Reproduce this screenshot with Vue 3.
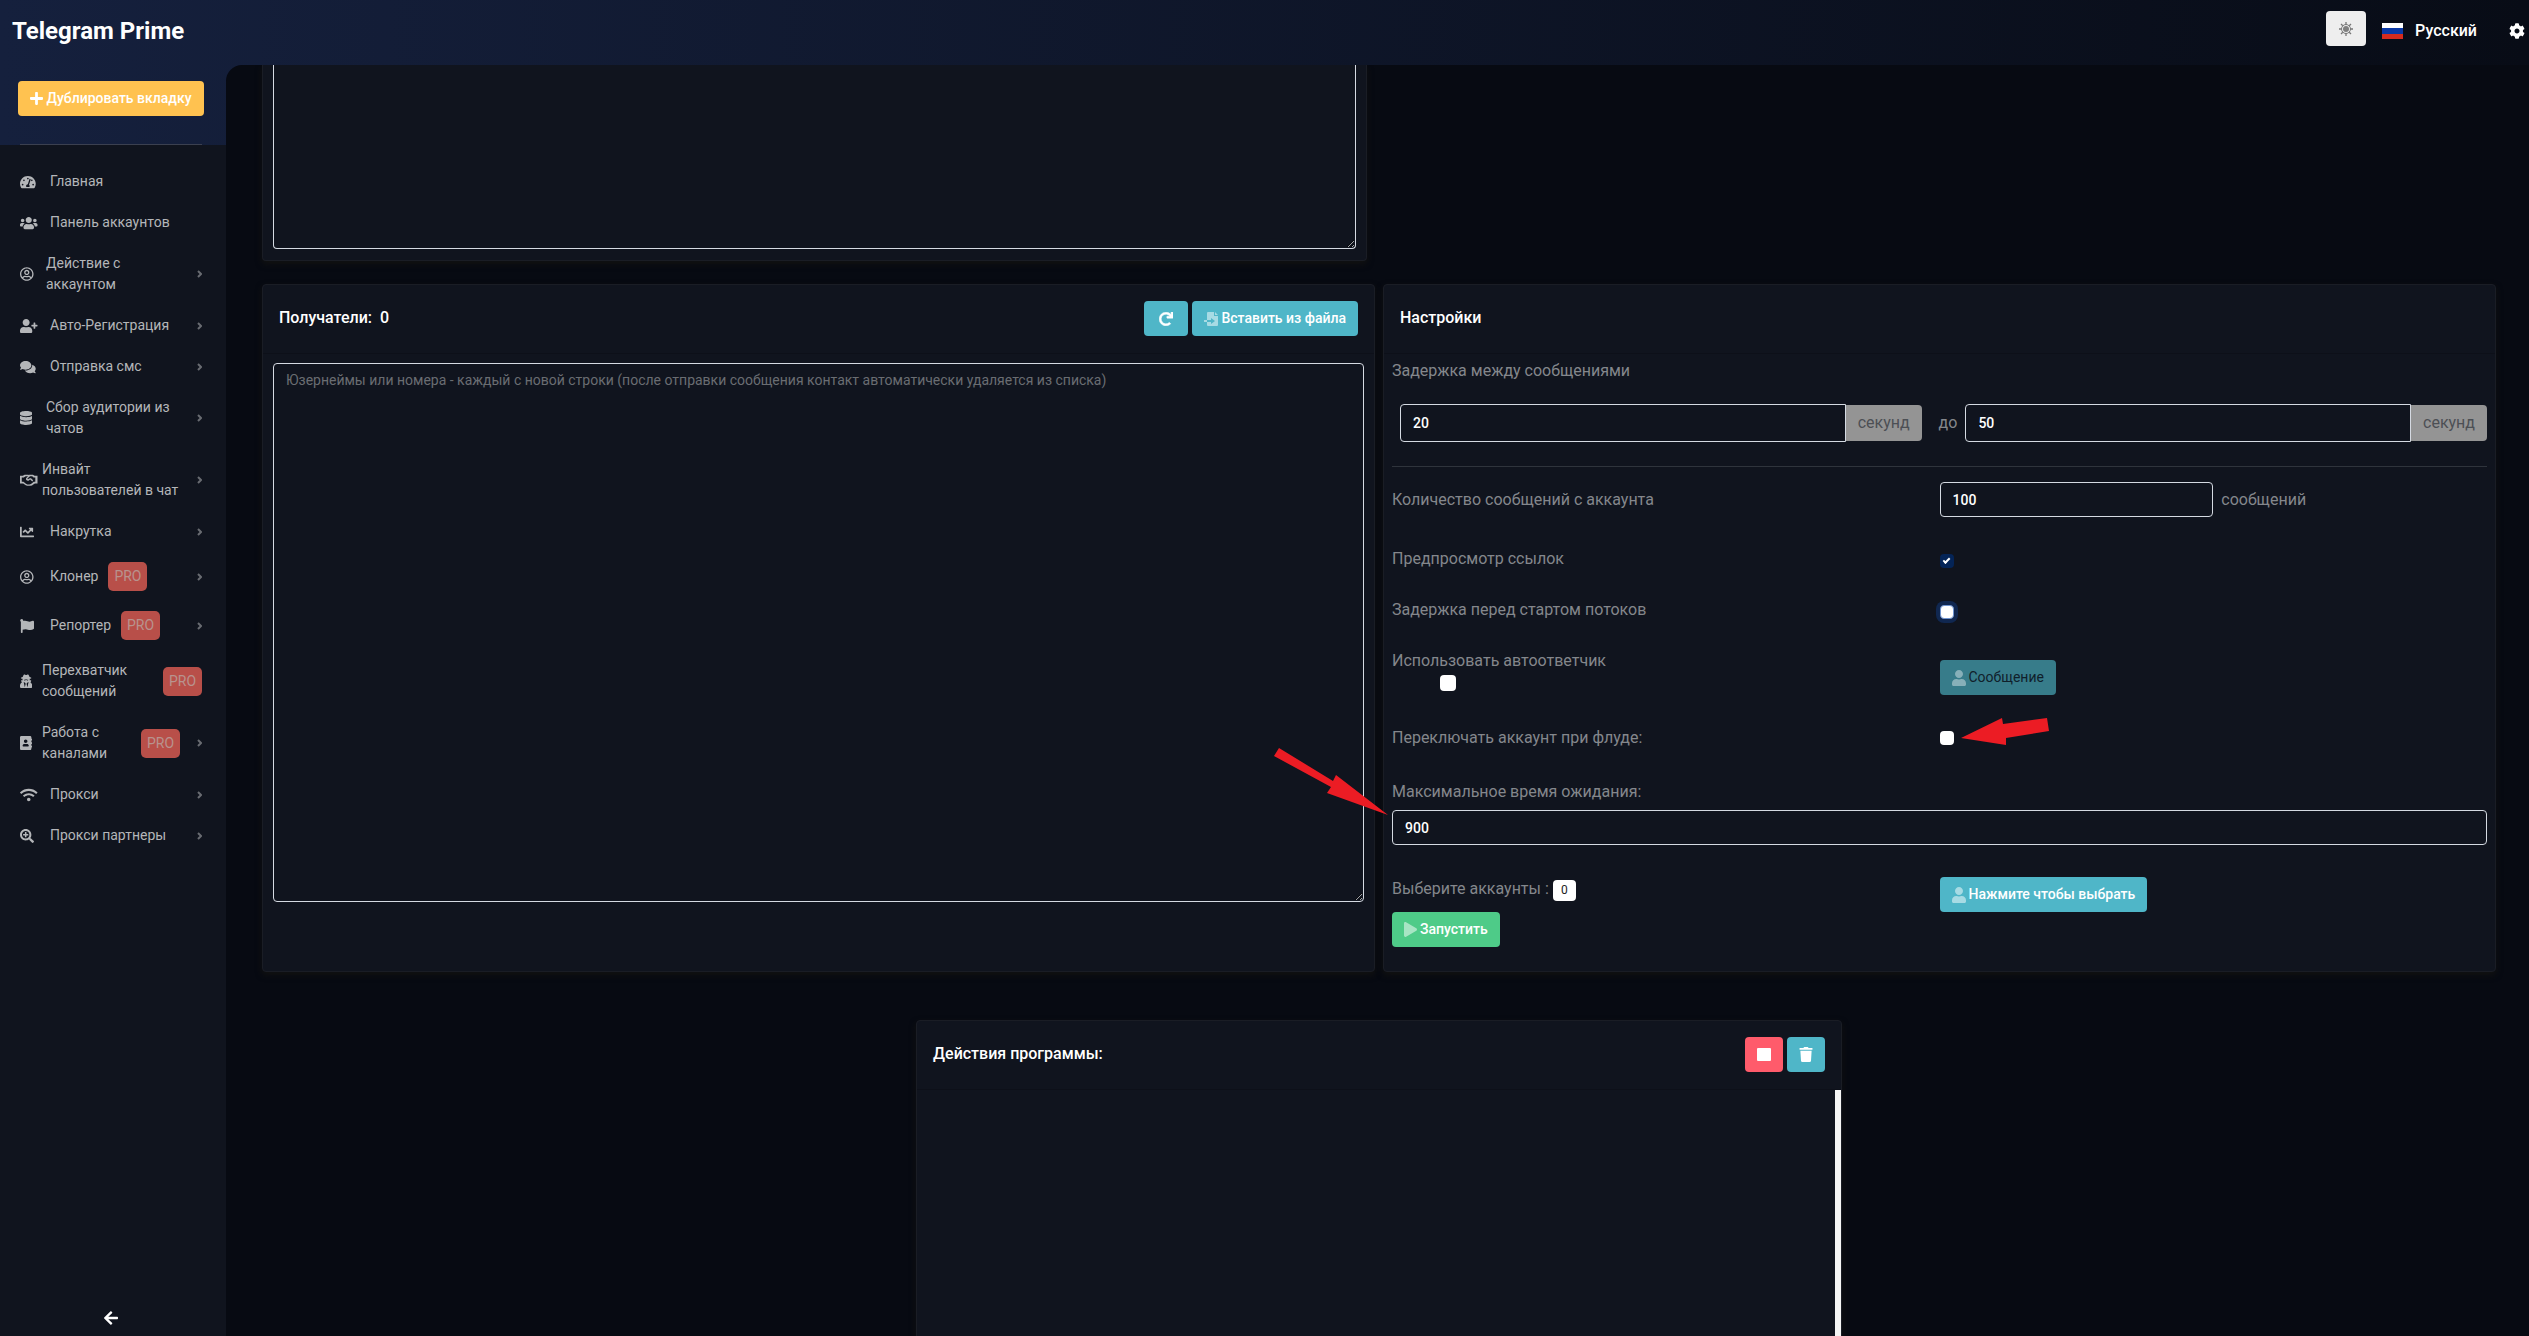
<script setup>
import { ref } from 'vue'

const userPath =
  'M224 256c70.7 0 128-57.3 128-128S294.7 0 224 0 96 57.3 96 128s57.3 128 128 128zm89.6 32h-16.7c-22.2 10.2-46.9 16-72.9 16s-50.6-5.8-72.9-16h-16.7C60.2 288 0 348.2 0 422.4V464c0 26.5 21.5 48 48 48h352c26.5 0 48-21.5 48-48v-41.6c0-74.2-60.2-134.4-134.4-134.4z'
const circleUser =
  'M248 104c-53 0-96 43-96 96s43 96 96 96 96-43 96-96-43-96-96-96zm0 144c-26.5 0-48-21.5-48-48s21.5-48 48-48 48 21.5 48 48-21.5 48-48 48zm0-240C111 8 0 119 0 256s111 248 248 248 248-111 248-248S385 8 248 8zm0 448c-49.7 0-95.1-18.3-130.1-48.4 14.9-23 40.4-38.6 69.6-39.5 20.8 6.4 40.6 9.6 60.5 9.6s39.7-3.1 60.5-9.6c29.2 1 54.7 16.5 69.6 39.5-35 30.1-80.4 48.4-130.1 48.4zm162.7-84.1c-24.4-31.4-62.1-51.9-105.1-51.9-10.2 0-26 9.6-57.6 9.6-31.5 0-47.4-9.6-57.6-9.6-42.9 0-80.6 20.5-105.1 51.9C61.9 339.2 48 299.2 48 256c0-110.3 89.7-200 200-200s200 89.7 200 200c0 43.2-13.9 83.2-37.3 115.9z'

const menu = [
  {
    text: 'Главная', w: 576,
    d: 'M288 32C129 32 0 161 0 320c0 53 14 102 39 145 6 10 16 15 27 15h444c11 0 21-5 27-15 25-43 39-92 39-145C576 161 447 32 288 32zm0 64c18 0 32 14 32 32s-14 32-32 32-32-14-32-32 14-32 32-32zM96 384c-18 0-32-14-32-32s14-32 32-32 32 14 32 32-14 32-32 32zm48-160c-18 0-32-14-32-32s14-32 32-32 32 14 32 32-14 32-32 32zm246-51-61 184c14 12 23 29 23 49 0 11-3 22-8 31H232c-5-9-8-20-8-31 0-35 28-64 62-64l58-184c4-13 18-20 31-15 13 4 19 17 15 30zm42 51c-18 0-32-14-32-32s14-32 32-32 32 14 32 32-14 32-32 32zm48 160c-18 0-32-14-32-32s14-32 32-32 32 14 32 32-14 32-32 32z'
  },
  {
    text: 'Панель аккаунтов', w: 640,
    d: 'M96 224c35.3 0 64-28.7 64-64s-28.7-64-64-64-64 28.7-64 64 28.7 64 64 64zm448 0c35.3 0 64-28.7 64-64s-28.7-64-64-64-64 28.7-64 64 28.7 64 64 64zm32 32h-64c-17.6 0-33.5 7.1-45.1 18.6 40.3 22.1 68.9 62 75.1 109.4h66c17.7 0 32-14.3 32-32v-32c0-35.3-28.7-64-64-64zm-256 0c61.9 0 112-50.1 112-112S381.9 32 320 32 208 82.1 208 144s50.1 112 112 112zm76.8 32h-8.3c-20.8 10-43.9 16-68.5 16s-47.6-6-68.5-16h-8.3C179.6 288 128 339.6 128 403.2V432c0 26.5 21.5 48 48 48h288c26.5 0 48-21.5 48-48v-28.8c0-63.6-51.6-115.2-115.2-115.2zm-223.7-13.4C161.5 263.1 145.6 256 128 256H64c-35.3 0-64 28.7-64 64v32c0 17.7 14.3 32 32 32h65.9c6.3-47.4 34.9-87.3 75.2-109.4z'
  },
  { text: 'Действие с аккаунтом', w: 496, d: circleUser, fit: 'mid', arrow: true },
  {
    text: 'Авто-Регистрация', w: 640, arrow: true,
    d: 'M624 208h-64v-64c0-8.8-7.2-16-16-16h-32c-8.8 0-16 7.2-16 16v64h-64c-8.8 0-16 7.2-16 16v32c0 8.8 7.2 16 16 16h64v64c0 8.8 7.2 16 16 16h32c8.8 0 16-7.2 16-16v-64h64c8.8 0 16-7.2 16-16v-32c0-8.8-7.2-16-16-16z' + userPath
  },
  {
    text: 'Отправка смс', w: 576, arrow: true,
    d: 'M416 192c0-88.4-93.1-160-208-160S0 103.6 0 192c0 34.3 14.1 65.9 38 92-13.4 30.2-35.5 54.2-35.8 54.5-2.2 2.3-2.8 5.7-1.5 8.7S4.8 352 8 352c36.6 0 66.9-12.3 88.7-25 32.2 15.7 70.3 25 111.3 25 114.9 0 208-71.6 208-160zm122 220c23.9-26 38-57.7 38-92 0-66.9-53.5-124.2-129.3-148.1.9 6.6 1.3 13.3 1.3 20.1 0 105.9-107.7 192-240 192-10.8 0-21.3-.8-31.7-1.9C207.8 439.6 281.8 480 368 480c41 0 79.1-9.2 111.3-25 21.8 12.7 52.1 25 88.7 25 3.2 0 6.1-1.9 7.3-4.8 1.3-2.9.7-6.3-1.5-8.7-.3-.3-22.4-24.2-35.8-54.5z'
  },
  {
    text: 'Сбор аудитории из чатов', w: 448, fit: 'mid', arrow: true,
    d: 'M448 73v46C448 159 348 192 224 192S0 159 0 119V73C0 33 100 0 224 0s224 33 224 73zM448 176v103C448 319 348 352 224 352S0 319 0 279V176c48 33 136 49 224 49s176-16 224-49zm0 160v103C448 479 348 512 224 512S0 479 0 439V336c48 33 136 49 224 49s176-16 224-49z'
  },
  {
    text: 'Инвайт пользователей в чат', w: 640, fit: 'tight', arrow: true,
    d: 'M0 100h105l62-36h138l15 10 15-10h138l62 36h105v284h-96l-74 50-30 22-60 14H260l-50-22-92-64H0zm64 60v160h60l92 70 54 28h70l60-16 60-50 42-32h58V160h-64l-50-38h-80l-96 76 20 32 68-42h44l78 78-30 44-80-68-60 38c-40 18-90-20-92-60 0-20 8-36 22-48l54-50h-84l-70 38z'
  },
  {
    text: 'Накрутка', w: 512, arrow: true,
    d: 'M496 384H64V80c0-8.84-7.16-16-16-16H16C7.16 64 0 71.16 0 80v336c0 17.67 14.33 32 32 32h464c8.84 0 16-7.16 16-16v-32c0-8.84-7.16-16-16-16zM464 96H345.94c-21.38 0-32.09 25.85-16.97 40.97l32.4 32.4L288 242.75l-73.37-73.37c-12.5-12.5-32.76-12.5-45.25 0l-68.69 68.69c-6.25 6.25-6.25 16.38 0 22.63l22.62 22.62c6.25 6.25 16.38 6.25 22.63 0L192 237.25l73.37 73.37c12.5 12.5 32.76 12.5 45.25 0l96-96 32.4 32.4c15.12 15.12 40.97 4.41 40.97-16.97V112c.01-8.84-7.15-16-15.99-16z'
  },
  { text: 'Клонер', w: 496, d: circleUser, pro: true, arrow: true },
  {
    text: 'Репортер', w: 512, pro: true, arrow: true,
    d: 'M350 99C296 99 252 64 184 64c-25 0-47 4-68 12a56 56 0 0 0 4-24C118 24 95 1 66 0 34-1 8 24 8 56c0 19 9 36 24 46V488c0 13 11 24 24 24h16c13 0 24-11 24-24v-94c28-12 64-22 114-22 54 0 98 34 166 34 48 0 86-16 122-41 9-6 14-15 14-26V96c0-23-24-39-45-29-35 16-77 32-117 32z'
  },
  {
    text: 'Перехватчик сообщений', w: 448, fit: 'tight', pro: true,
    d: 'M384 308l23-55c5-10-3-21-14-21h-39c2-13 3-26 3-40 0-6 0-12-1-17 37-8 60-19 60-31 0-13-26-25-66-33-9-32-27-67-40-84-10-12-26-15-40-8l-28 14c-11 6-25 6-36 0L178 19c-14-7-30-4-40 8-14 17-31 52-40 84-40 8-66 20-66 33 0 12 23 23 60 31-1 5-1 11-1 17 0 14 1 27 4 40H56c-12 0-20 12-14 23l26 52C28 331 0 373 0 422v42c0 27 22 48 48 48h352c27 0 48-21 48-48v-42c0-48-26-89-64-114zM176 480l-41-192 49 32 24 40zm96 0-32-120 24-40 49-32zM144 206c28 8 58 8 72-12h16c14 20 44 20 72 12-8 30-30 38-48 30-14-6-18-22-24-22h-16c-6 0-10 16-24 22-18 8-40 0-48-30z'
  },
  {
    text: 'Работа с каналами', w: 448, fit: 'tight', pro: true, arrow: true,
    d: 'M436 160c7 0 12-5 12-12v-40c0-7-5-12-12-12h-20V48c0-27-21-48-48-48H48C22 0 0 21 0 48v416c0 27 22 48 48 48h320c27 0 48-21 48-48v-48h20c7 0 12-5 12-12v-40c0-7-5-12-12-12h-20v-64h20c7 0 12-5 12-12v-40c0-7-5-12-12-12h-20v-64zM208 128c35 0 64 29 64 64s-29 64-64 64-64-29-64-64 29-64 64-64zm112 237c0 10-10 19-22 19H118c-12 0-22-9-22-19v-19c0-32 30-58 67-58 4 0 16 8 45 8s41-8 45-8c37 0 67 26 67 58z'
  },
  {
    text: 'Прокси', w: 640, arrow: true,
    d: 'M635 154C457-12 183-12 5 154c-7 6-7 17 0 23l34 34c6 6 17 7 23 0 145-134 371-134 516 0 6 7 17 6 23 0l34-34c6-6 6-17 0-23zM320 352c-35 0-64 29-64 64s29 64 64 64 64-29 64-64-29-64-64-64zm203-87c-115-102-290-102-405 0-7 6-8 17-1 23l35 34c6 6 16 7 23 1 82-73 208-73 291 0 7 6 17 5 23-1l34-34c7-6 7-17 0-23z'
  },
  {
    text: 'Прокси партнеры', w: 512, arrow: true,
    d: 'M304 192v32c0 7-5 12-12 12h-56v56c0 7-5 12-12 12h-32c-7 0-12-5-12-12v-56h-56c-7 0-12-5-12-12v-32c0-7 5-12 12-12h56v-56c0-7 5-12 12-12h32c7 0 12 5 12 12v56h56c7 0 12 5 12 12zm201 285-28 28c-10 10-25 10-34 0L343 405c-4-4-7-11-7-17v-16c-35 28-80 44-128 44C93 416 0 323 0 208S93 0 208 0s208 93 208 208c0 48-16 93-44 128h16c6 0 13 3 17 7l100 100c9 9 9 24 0 34zM344 208c0-75-61-136-136-136S72 133 72 208s61 136 136 136 136-61 136-136z'
  }
]

const recipients = ref('')
const delayFrom = ref('20')
const delayTo = ref('50')
const perAccount = ref('100')
const maxWait = ref('900')
const preview = ref(true)
const startDelay = ref(false)
const autoReply = ref(false)
const floodSwitch = ref(false)
</script>

<template>
  <div class="app">
    <header class="topbar">
      <h1 class="brand">Telegram Prime</h1>
      <button class="theme" type="button" aria-label="Тема">
        <svg width="14" height="14" viewBox="0 0 14 14">
          <path d="M7 0v14M0 7h14M2 2l10 10M12 2 2 12" stroke="#777" stroke-width="1.3" />
          <circle cx="7" cy="7" r="4.5" fill="#eee" stroke="#777" />
          <circle cx="7" cy="7" r="3" fill="#808080" />
        </svg>
      </button>
      <a class="lang" href="#">
        <svg width="21" height="16" viewBox="0 0 21 16">
          <path fill="#fff" d="M0 0h21v6H0z" /><path fill="#0b39a6" d="M0 5h21v6H0z" /><path fill="#d52b1e" d="M0 11h21v5H0z" />
        </svg>
        Русский
      </a>
      <button class="gear" type="button" aria-label="Настройки">
        <svg width="16" height="16" viewBox="0 0 512 512"><path fill="currentColor" d="M487.4 315.7l-42.6-24.6c4.3-23.2 4.3-47 0-70.2l42.6-24.6c4.9-2.8 7.1-8.6 5.5-14-11.1-35.6-30-67.8-54.7-94.6-3.8-4.1-10-5.1-14.8-2.3L380.8 110c-17.9-15.4-38.5-27.3-60.8-35.1V25.8c0-5.6-3.9-10.5-9.4-11.7-36.7-8.2-74.3-7.8-109.2 0-5.5 1.2-9.4 6.1-9.4 11.7V75c-22.2 7.9-42.8 19.8-60.8 35.1L88.7 85.5c-4.9-2.8-11-1.9-14.8 2.3-24.7 26.7-43.6 58.9-54.7 94.6-1.7 5.4.6 11.2 5.5 14L67.3 221c-4.3 23.2-4.3 47 0 70.2l-42.6 24.6c-4.9 2.8-7.1 8.6-5.5 14 11.1 35.6 30 67.8 54.7 94.6 3.8 4.1 10 5.1 14.8 2.3l42.6-24.6c17.9 15.4 38.5 27.3 60.8 35.1v49.2c0 5.6 3.9 10.5 9.4 11.7 36.7 8.2 74.3 7.8 109.2 0 5.5-1.2 9.4-6.1 9.4-11.7v-49.2c22.2-7.9 42.8-19.8 60.8-35.1l42.6 24.6c4.9 2.8 11 1.9 14.8-2.3 24.7-26.7 43.6-58.9 54.7-94.6 1.5-5.5-.7-11.3-5.6-14.1zM256 336c-44.1 0-80-35.9-80-80s35.9-80 80-80 80 35.9 80 80-35.9 80-80 80z" /></svg>
      </button>
    </header>

    <div class="shell">
      <aside class="sidebar">
        <div class="side-top">
          <button class="btn yellow" type="button">
            <svg width="13" height="15" viewBox="0 0 448 512"><path fill="currentColor" d="M416 208H272V64c0-17.67-14.33-32-32-32h-32c-17.67 0-32 14.33-32 32v144H32c-17.67 0-32 14.33-32 32v32c0 17.67 14.33 32 32 32h144v144c0 17.67 14.33 32 32 32h32c17.67 0 32-14.33 32-32V304h144c17.67 0 32-14.33 32-32v-32c0-17.67-14.33-32-32-32z" /></svg>
            Дублировать вкладку
          </button>
          <hr />
        </div>
        <nav class="menu">
          <a v-for="item in menu" :key="item.text" href="#" class="item" :class="item.fit">
            <span class="ico">
              <svg :viewBox="`0 0 ${item.w} 512`" height="14"><path fill="currentColor" fill-rule="evenodd" :d="item.d" /></svg>
            </span>
            <span class="text">{{ item.text }}</span>
            <span v-if="item.pro" class="pro">PRO</span>
            <svg v-if="item.arrow" class="chev" width="5" height="8" viewBox="0 0 5 8"><path d="M1 1l3 3-3 3" fill="none" stroke="currentColor" stroke-width="2" /></svg>
          </a>
        </nav>
        <button class="collapse" type="button" aria-label="Свернуть">
          <svg width="14" height="16" viewBox="0 0 448 512"><path fill="currentColor" d="M257.5 445.1l-22.2 22.2c-9.4 9.4-24.6 9.4-33.9 0L7 273c-9.4-9.4-9.4-24.6 0-33.9L201.4 44.7c9.4-9.4 24.6-9.4 33.9 0l22.2 22.2c9.5 9.5 9.3 25-.4 34.3L136.6 216H424c13.3 0 24 10.7 24 24v32c0 13.3-10.7 24-24 24H136.6l120.5 114.8c9.8 9.3 10 24.8.4 34.3z" /></svg>
        </button>
      </aside>

      <main class="content">
        <section class="card message">
          <textarea class="field" aria-label="Текст сообщения"></textarea>
        </section>

        <section class="card recipients">
          <header class="card-head">
            <h2><label for="recipients">Получатели:&nbsp; 0</label></h2>
            <div class="actions">
              <button class="btn cyan reload" type="button" aria-label="Обновить">
                <svg width="14" height="14" viewBox="0 0 512 512"><path fill="currentColor" stroke="currentColor" stroke-width="20" d="M500.33 0h-47.41a12 12 0 0 0-12 12.57l4 82.76A247.42 247.42 0 0 0 256 8C119.34 8 7.9 119.53 8 256.19 8.1 393.07 119.1 504 256 504a247.1 247.1 0 0 0 166.18-63.91 12 12 0 0 0 .48-17.43l-34-34a12 12 0 0 0-16.38-.55A176 176 0 1 1 402.1 157.8l-101.53-4.87a12 12 0 0 0-12.57 12v47.41a12 12 0 0 0 12 12h200.33a12 12 0 0 0 12-12V12a12 12 0 0 0-12-12z" /></svg>
              </button>
              <button class="btn cyan" type="button">
                <svg width="14" height="14" viewBox="0 0 14 14">
                  <path fill="#fff" fill-opacity=".5" d="M4 0h6v4h4v9q0 1-1 1H4q-1 0-1-1V1q0-1 1-1zM11 0l3 3h-3z" />
                  <path fill="#fff" fill-opacity=".5" d="M0 8h3v2H0z" />
                  <path fill="#4fb6c8" d="M3 8h4V6l4 3-4 3v-2H3z" />
                </svg>
                Вставить из файла
              </button>
            </div>
          </header>
          <div class="card-body">
            <textarea
              id="recipients"
              v-model="recipients"
              class="field"
              placeholder="Юзернеймы или номера - каждый с новой строки (после отправки сообщения контакт автоматически удаляется из списка)"
            ></textarea>
          </div>
        </section>

        <section class="card settings">
          <header class="card-head"><h2>Настройки</h2></header>
          <div class="card-body">
            <label for="delay-from">Задержка между сообщениями</label>
            <div class="range">
              <div class="group">
                <input id="delay-from" v-model="delayFrom" class="field" type="text" />
                <span class="addon">секунд</span>
              </div>
              <label for="delay-to">до</label>
              <div class="group">
                <input id="delay-to" v-model="delayTo" class="field" type="text" />
                <span class="addon">секунд</span>
              </div>
            </div>
            <hr />
            <div class="row count">
              <label for="per-account">Количество сообщений с аккаунта</label>
              <div class="inline">
                <input id="per-account" v-model="perAccount" class="field" type="text" />
                <span>сообщений</span>
              </div>
            </div>
            <div class="row option">
              <label for="preview">Предпросмотр ссылок</label>
              <div class="inline"><input id="preview" v-model="preview" type="checkbox" /></div>
            </div>
            <div class="row option">
              <label for="start-delay">Задержка перед стартом потоков</label>
              <div class="inline"><input id="start-delay" v-model="startDelay" class="focused" type="checkbox" /></div>
            </div>
            <div class="row auto">
              <div class="stack">
                <label for="auto-reply">Использовать автоответчик</label>
                <input id="auto-reply" v-model="autoReply" class="big" type="checkbox" />
              </div>
              <div class="inline">
                <button class="btn cyan" type="button" disabled>
                  <svg width="14" height="16" viewBox="0 0 448 512"><path fill="#fff" fill-opacity=".4" :d="userPath" /></svg>
                  Сообщение
                </button>
              </div>
            </div>
            <div class="row flood">
              <label for="flood">Переключать аккаунт при флуде:</label>
              <div class="inline marked">
                <input id="flood" v-model="floodSwitch" type="checkbox" />
                <svg class="mark-left" width="88" height="28" viewBox="0 0 88 28"><path fill="#ec1c24" d="M0 20 41 0l1 6 44-6 2 13-43 7 0 7z" /></svg>
              </div>
            </div>
            <label for="max-wait">Максимальное время ожидания:</label>
            <div class="marked">
              <input id="max-wait" v-model="maxWait" class="field" type="text" />
              <svg class="mark-right" width="114" height="68" viewBox="0 0 114 68"><path fill="#ec1c24" d="M5 0 59 33l3-6 52 40-61-22 4-6L0 8z" /></svg>
            </div>
            <div class="row pick">
              <div>Выберите аккаунты : <span class="badge">0</span></div>
              <div class="inline">
                <button class="btn cyan" type="button">
                  <svg width="14" height="16" viewBox="0 0 448 512"><path fill="#fff" fill-opacity=".5" :d="userPath" /></svg>
                  Нажмите чтобы выбрать
                </button>
              </div>
            </div>
            <button class="btn green" type="button">
              <svg width="13" height="15" viewBox="0 0 448 512"><path fill="#fff" fill-opacity=".5" d="M424.4 214.7L72.4 6.6C43.8-10.3 0 6.1 0 47.9V464c0 37.5 40.7 60.1 72.4 41.3l352-208c31.4-18.5 31.5-64.1 0-82.6z" /></svg>
              Запустить
            </button>
          </div>
        </section>

        <section class="card log">
          <header class="card-head">
            <h2>Действия программы:</h2>
            <div class="actions">
              <button class="btn red" type="button" aria-label="Остановить">
                <svg width="14" height="14" viewBox="0 0 14 14"><rect width="14" height="13" rx="1" fill="#fff" /></svg>
              </button>
              <button class="btn cyan" type="button" aria-label="Очистить">
                <svg width="14" height="15" viewBox="0 0 448 512"><path fill="currentColor" d="M432 32H312l-9.4-18.7A24 24 0 0 0 281.1 0H166.8a23.72 23.72 0 0 0-21.4 13.3L136 32H16A16 16 0 0 0 0 48v32a16 16 0 0 0 16 16h416a16 16 0 0 0 16-16V48a16 16 0 0 0-16-16zM53.2 467a48 48 0 0 0 47.9 45h245.8a48 48 0 0 0 47.9-45L416 128H32z" /></svg>
              </button>
            </div>
          </header>
          <div class="log-body"><div class="thumb"></div></div>
        </section>
      </main>
    </div>
  </div>
</template>

<style>
body {
  margin: 0;
  background: #070a12;
}
</style>

<style scoped>
.app {
  display: flex;
  flex-direction: column;
  height: 100vh;
  overflow: hidden;
  background: linear-gradient(90deg, #15203d 0%, #080c16 100%) top / 100% 145px no-repeat #10141e;
  color: #84878c;
  font-family: Roboto, 'Noto Sans', sans-serif;
  font-size: 16px;
  line-height: 24px;
}
*,
*::before {
  box-sizing: border-box;
}
button,
input,
textarea {
  font: inherit;
}
button {
  cursor: pointer;
}
a {
  color: inherit;
  text-decoration: none;
}
svg {
  display: block;
  flex: none;
}
hr {
  height: 1px;
  margin: 0;
  border: 0;
  background: #2f343c;
}

.topbar {
  display: flex;
  flex: none;
  align-items: center;
  height: 65px;
  padding: 0 4px 4px 12px;
  color: #fff;
}
.brand {
  flex: 1;
  margin: 0;
  font-size: 24px;
  font-weight: 700;
  line-height: 32px;
}
.theme {
  display: flex;
  align-items: center;
  justify-content: center;
  width: 40px;
  height: 35px;
  margin: 0 16px 4px 0;
  border: 0;
  border-radius: 4px;
  background: #eee;
}
.lang {
  display: flex;
  align-items: center;
  gap: 12px;
  margin-right: 32px;
  font-weight: 500;
}
.gear {
  padding: 0;
  border: 0;
  background: none;
  color: #fff;
}

.shell {
  display: flex;
  flex: 1;
  min-height: 0;
}
.sidebar {
  display: flex;
  flex: none;
  flex-direction: column;
  width: 226px;
}
.side-top {
  height: 80px;
  padding: 16px 22px 0 18px;
}
.side-top .btn {
  width: 100%;
}
.side-top hr {
  margin: 28px 2px 0;
  background: #3b4050;
}
.menu {
  flex: 1;
  padding-top: 16px;
}
.item {
  display: flex;
  align-items: center;
  padding: 10px 24px 10px 20px;
  color: #b4b6b9;
  font-size: 14px;
  line-height: 21px;
}
.ico {
  flex: none;
  width: 30px;
}
.mid .ico {
  width: 26px;
}
.tight .ico {
  width: 22px;
}
.mid .text,
.tight .text {
  width: 144px;
}
.tight:has(.pro) .text {
  width: 92px;
}
.pro {
  width: 39px;
  margin-left: 10px;
  border-radius: 5px;
  background: #b84f49;
  color: #b8938e;
  line-height: 29px;
  text-align: center;
}
.tight .pro {
  margin-left: auto;
}
.tight .pro + .chev {
  margin-left: 17px;
}
.chev {
  margin-left: auto;
  color: #686b71;
}
.collapse {
  display: flex;
  justify-content: center;
  padding: 0 4px 10px 0;
  border: 0;
  background: none;
  color: #fff;
}

.content {
  display: grid;
  flex: 1;
  grid-template-columns: 1fr 1fr;
  grid-template-rows: 196px 688px auto;
  gap: 23px 8px;
  min-width: 0;
  padding: 0 33px 0 36px;
  overflow: hidden;
  border-top-left-radius: 16px;
  background: #070a12;
}
.card {
  display: flex;
  flex-direction: column;
  border: 1px solid #1a1d25;
  border-radius: 4px;
  background: #10141e;
  box-shadow: 0 3px 6px #121211;
}
.card-head {
  display: flex;
  flex: none;
  align-items: flex-start;
  justify-content: space-between;
  height: 69px;
  padding: 16px;
  border-bottom: 1px solid #0d1019;
}
h2 {
  margin: 5px 0 0;
  color: #fff;
  font-size: 16px;
  font-weight: 500;
  line-height: 24px;
}
.actions {
  display: flex;
  gap: 4px;
}
.card-body {
  display: flex;
  flex: 1;
  flex-direction: column;
}
.message {
  grid-column: 1;
  margin-right: 8px;
  padding: 0 10px 11px;
  border-top: 0;
  border-radius: 0 0 4px 4px;
}
.message .field {
  flex: 1;
  border-top: 0;
  border-radius: 0 0 4px 4px;
}
.recipients,
.settings {
  grid-row: 2;
}
.recipients .card-body {
  padding: 9px 10px;
}
.recipients .field {
  height: 539px;
}

.field {
  display: block;
  width: 100%;
  height: 35px;
  padding: 6px 12px;
  border: 1px solid #d5dae2;
  border-radius: 4px;
  outline: 0;
  background: #10141e;
  color: #fff;
  font-size: 14px;
  font-weight: 500;
  line-height: 21px;
}
textarea.field {
  resize: vertical;
}
.field::placeholder {
  color: #6a6d72;
  font-weight: 400;
}

.btn {
  display: inline-flex;
  align-items: center;
  justify-content: center;
  gap: 3px;
  height: 35px;
  padding: 0 12px;
  border: 0;
  border-radius: 4px;
  color: #fff;
  font-size: 14px;
  font-weight: 500;
  line-height: 21px;
  white-space: nowrap;
}
.yellow {
  background: #ffc250;
}
.cyan {
  background: #4fb6c8;
}
.green {
  align-self: flex-start;
  background: #4ecb88;
}
.red {
  background: #ff5b6b;
}
.reload {
  width: 44px;
}
.btn:disabled {
  background: #377c8a;
  color: #10202b;
  font-weight: 400;
}

.settings .card-body {
  padding: 5px 8px 0;
}
.range {
  display: flex;
  align-items: center;
  gap: 8px;
  margin: 21px 0 24px;
  padding-left: 8px;
}
.range > label {
  margin-left: 9px;
}
.group {
  display: flex;
  flex: 1;
  align-items: center;
}
.group .field {
  flex: 1;
  width: auto;
  min-width: 0;
  height: 38px;
  border-radius: 4px 0 0 4px;
}
.addon {
  width: 76px;
  border-radius: 0 4px 4px 0;
  background: #949494;
  color: #4c4f54;
  line-height: 36px;
  text-align: center;
}
.row {
  display: grid;
  grid-template-columns: 1fr 1fr;
  align-items: center;
}
.inline {
  display: flex;
  align-items: center;
  gap: 8px;
}
.inline .field {
  width: 50%;
}
.count {
  margin: 15px 0 30px;
}
.option {
  margin-bottom: 27px;
}
.option .inline {
  padding-top: 4px;
}
input[type='checkbox'] {
  display: grid;
  width: 14px;
  height: 14px;
  margin: 0;
  appearance: none;
  border-radius: 4px;
  background: #fff;
}
input[type='checkbox']:checked {
  background: #042457;
}
input[type='checkbox']:checked::before {
  place-self: center;
  width: 7px;
  height: 4px;
  border: solid #fff;
  border-width: 0 0 2px 2px;
  content: '';
  transform: translateY(-1px) rotate(-45deg);
}
input[type='checkbox'].focused {
  border: 1px solid #6f93d0;
  box-shadow: 0 0 0 4px #102750;
}
input[type='checkbox'].big {
  width: 16px;
  height: 16px;
  margin-left: 48px;
}
.auto {
  margin-bottom: 31px;
}
.stack {
  display: flex;
  flex-direction: column;
  gap: 2px;
  align-self: start;
}
.auto .inline {
  padding-top: 11px;
}
.flood {
  margin-bottom: 30px;
}
.marked {
  position: relative;
}
.mark-left {
  position: absolute;
  top: -13px;
  left: 21px;
}
.mark-right {
  position: absolute;
  top: -56px;
  left: -118px;
}
.marked .field {
  margin-top: 6px;
}
.pick {
  align-items: start;
  margin-top: 32px;
}
.badge {
  display: inline-block;
  width: 23px;
  border-radius: 4px;
  background: #fff;
  color: #222;
  font-size: 12px;
  line-height: 21px;
  text-align: center;
}

.log {
  grid-column: 1 / -1;
  justify-self: center;
  width: calc(100% * 5 / 12 - 5px);
  height: 400px;
  margin-top: 25px;
}
.log-body {
  display: flex;
  flex: 1;
  justify-content: flex-end;
}
.thumb {
  width: 6px;
  background: #f5f5f5;
}
</style>
